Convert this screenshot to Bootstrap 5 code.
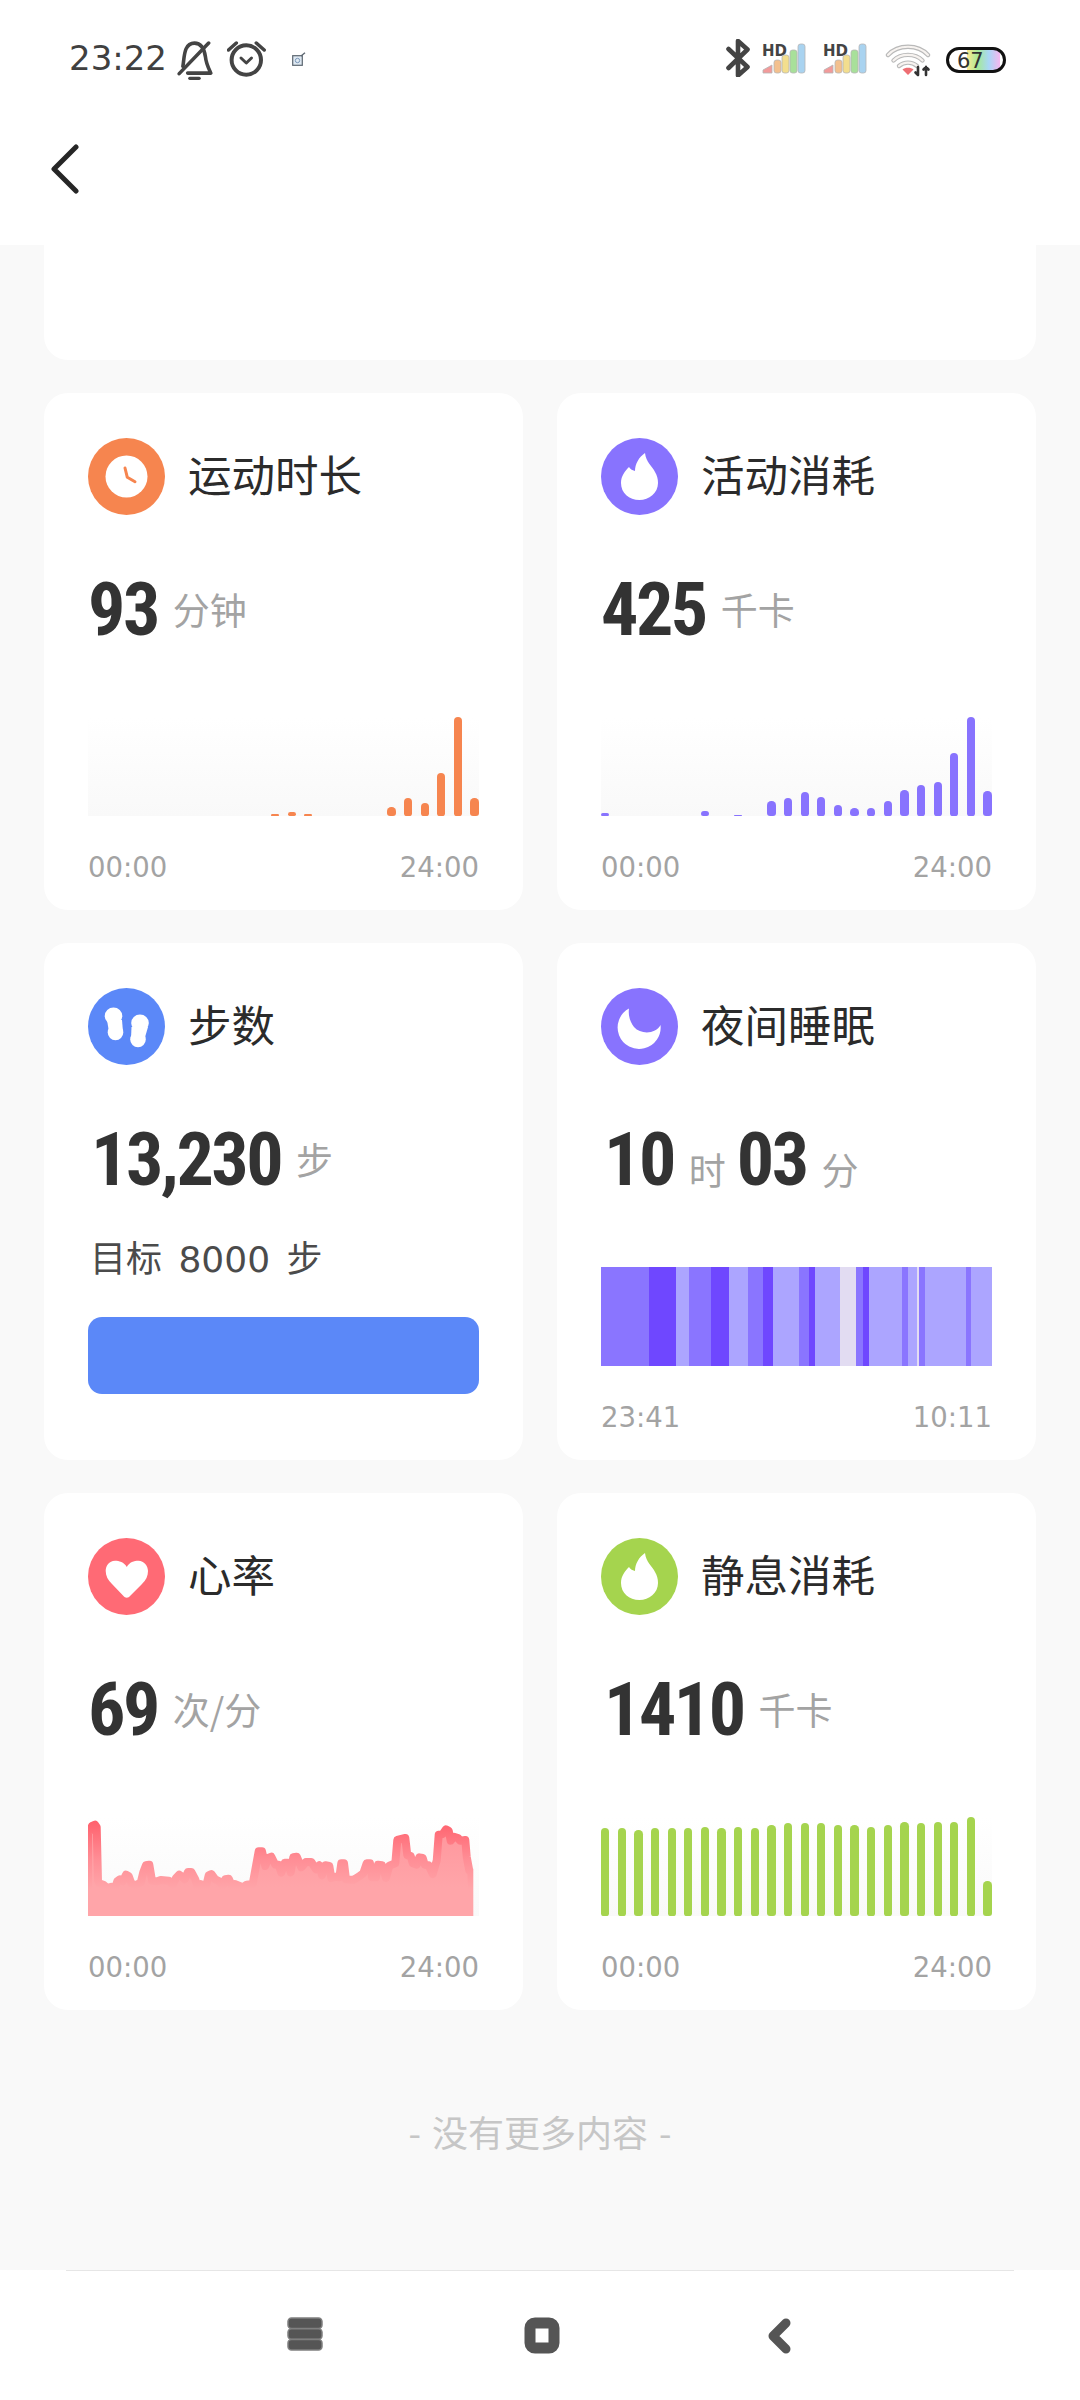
<!DOCTYPE html>
<html lang="zh-CN">
<head>
    <meta charset="UTF-8">
    <meta name="viewport" content="width=device-width, initial-scale=1.0">
    <title>Health</title>
    <link href="https://cdn.jsdelivr.net/npm/bootstrap@5.3.2/dist/css/bootstrap.min.css" rel="stylesheet">
    <style>
        body {
            width: 1080px;
            height: 2400px;
            overflow: hidden;
            background: #f9f9f9;
            font-family: "DejaVu Sans", "Noto Sans CJK SC", sans-serif;
        }
        .top-area { height: 245px; background: #fff; }
        .status-row { height: 116px; padding: 39px 74px 0 69px; }
        .clock-text { font-size: 34px; line-height: 38px; color: #404040; margin-right: 10px; }
        .icon-bell { margin-top: 2px; }
        .icon-alarm { margin: 2px 0 0 14px; }
        .icon-tiny { margin: 13px 0 0 26px; }
        .icon-hd { margin: 4px 0 0 12px; }
        .icon-hd + .icon-hd { margin-left: 17px; }
        .icon-wifi { margin: 4px 0 0 18px; }
        .icon-batt { margin: 8px 0 0 15px; }
        .back-btn { display: block; margin-left: 51px; margin-top: 28px; }

        .partial-card { height: 115px; margin: 0 44px 33px; background: #fff; border-radius: 0 0 24px 24px; }
        .grid-wrap { padding: 0 44px; }
        .grid-wrap .row { --bs-gutter-x: 34px; --bs-gutter-y: 33px; }
        .tile { height: 517px; border: 0; border-radius: 24px; padding: 45px 44px 0; }
        .tile-head { height: 77px; }
        .tile-head svg { flex: none; }
        .tile-title { margin-left: 23px; padding-bottom: 5px; font-family: "Noto Sans CJK SC", sans-serif; font-size: 43.5px; line-height: 72px; color: #2b2b2b; }
        .val-row { height: 73px; margin-top: 58px; }
        .val-row.nudge { padding-left: 3px; }
        .val-num {
            font-family: "Liberation Sans Narrow", "Roboto Condensed", "Liberation Sans", sans-serif;
            font-weight: 700;
            font-size: 74px;
            line-height: 73px;
            letter-spacing: -2.5px;
            color: #333;
        }
        .val-unit { margin-left: 15px; font-family: "Noto Sans CJK SC", sans-serif; font-size: 37px; line-height: 71px; color: #a3a3a3; }
        .val-unit + .val-num { margin-left: 11px; }
        .chart-box { height: 99px; margin-top: 71px; position: relative; background: linear-gradient(#fff, #f9f9f9); }
        .bar-item { width: 8.3px; border-radius: 4.2px 4.2px 3px 3px; }
        .sleep-box { height: 99px; margin-top: 71px; }
        .axis-row { margin-top: 33px; font-size: 27.5px; line-height: 36px; color: #a3a3a3; }
        .goal-text { margin: 41px 0 0 2px; font-size: 36px; line-height: 46px; color: #4b4b4b; word-spacing: 5px; }
        .goal-bar { height: 77px; margin-top: 34px; background: #5b88f8; border-radius: 14px; }
        .no-more { margin-top: 96px; text-align: center; font-family: "Noto Sans CJK SC", sans-serif; font-size: 36px; line-height: 50px; color: #c6c6c6; word-spacing: 3px; }
        .bottom-nav { position: fixed; left: 0; right: 0; bottom: 0; height: 130px; background: #fff; }
        .nav-line { height: 1px; margin: 0 66px; background: #e6e6e6; }
        .nav-icons { padding: 46px 0 0 186px; }
        .nav-cell { width: 237px; text-align: center; }
    </style>
</head>
<body>

    <!-- Status bar and back button -->
    <div class="top-area">
        <div class="status-row d-flex align-items-start">
            <span class="clock-text">23:22</span>
            <svg class="icon-bell" width="36" height="40" viewBox="0 0 34 38" fill="none" stroke="#444" stroke-width="3.4" stroke-linecap="round" stroke-linejoin="round">
                <path d="M5.5 24C7 16 6 2 16.5 2C23 2 26 8 27 15.5C27.5 21 30 26 32 30.5H10"/>
                <path d="M30 2L2 31"/>
                <path d="M12 35.5H21" stroke-width="3"/>
            </svg>
            <svg class="icon-alarm" width="39" height="37" viewBox="0 0 39 37" fill="none" stroke="#444" stroke-linecap="round" stroke-linejoin="round">
                <circle cx="19.3" cy="19" r="14.7" stroke-width="4"/>
                <path d="M14 17L19.3 22L24.5 17" stroke-width="3"/>
                <path d="M1.5 9L9.3 2M29.3 2L37.2 9" stroke-width="3.5"/>
            </svg>
            <svg class="icon-tiny" width="14" height="14" viewBox="0 0 14 14" fill="none">
                <rect x="0.7" y="3.7" width="9.6" height="9.6" fill="#dfe9f2" stroke="#5c6670" stroke-width="1.2"/>
                <circle cx="5.5" cy="8.5" r="2.2" stroke="#7a97b8"/>
                <path d="M9 4L13 0.8" stroke="#5c6670" stroke-width="1.4"/>
            </svg>

            <svg class="ms-auto" width="24" height="38" viewBox="0 0 24 38" fill="none" stroke="#444" stroke-width="4.6" stroke-linecap="round" stroke-linejoin="round">
                <path d="M2.5 10L21.5 28L12 36.5V2L21.5 10.5L2.5 29"/>
            </svg>
            <svg class="icon-hd" width="44" height="32" viewBox="0 0 44 32">
                <text x="0" y="13" font-family="DejaVu Sans" font-weight="700" font-size="15" fill="#444">HD</text>
                <g stroke="#b5b5b5" stroke-width="0.8">
                    <path d="M1 30L1 27L10 22V30Z" fill="#f29a9a"/>
                    <rect x="12" y="17" width="7" height="13" rx="2.5" fill="#f3c08e"/>
                    <rect x="20" y="12" width="7" height="18" rx="2.5" fill="#f3de8e"/>
                    <rect x="28" y="7" width="7" height="23" rx="2.5" fill="#a8e09a"/>
                    <rect x="36" y="1" width="7" height="29" rx="2.5" fill="#a9d3f0"/>
                </g>
            </svg>
            <svg class="icon-hd" width="44" height="32" viewBox="0 0 44 32">
                <text x="0" y="13" font-family="DejaVu Sans" font-weight="700" font-size="15" fill="#444">HD</text>
                <g stroke="#b5b5b5" stroke-width="0.8">
                    <path d="M1 30L1 27L10 22V30Z" fill="#f29a9a"/>
                    <rect x="12" y="17" width="7" height="13" rx="2.5" fill="#f3c08e"/>
                    <rect x="20" y="12" width="7" height="18" rx="2.5" fill="#f3de8e"/>
                    <rect x="28" y="7" width="7" height="23" rx="2.5" fill="#a8e09a"/>
                    <rect x="36" y="1" width="7" height="29" rx="2.5" fill="#a9d3f0"/>
                </g>
            </svg>
            <svg class="icon-wifi" width="46" height="34" viewBox="0 0 46 34" fill="none" stroke-linecap="round">
                <g stroke="#b9b9b9" stroke-width="4.4">
                    <path d="M3 12C13 1 33 1 43 12"/>
                    <path d="M8.5 17.5C16 10 30 10 37.5 17.5"/>
                    <path d="M14 23C19 18.5 27 18.5 32 23"/>
                </g>
                <g stroke="#f7f3f0" stroke-width="2.2">
                    <path d="M3 12C13 1 33 1 43 12"/>
                    <path d="M8.5 17.5C16 10 30 10 37.5 17.5"/>
                    <path d="M14 23C19 18.5 27 18.5 32 23"/>
                </g>
                <path d="M23 32L17.5 26.5C20 24 26 24 28.5 26.5Z" fill="#ee6e73"/>
                <path d="M33 24V32M30.5 29.5L33 32M41 32V24M38.5 26.5L41 24L43.5 26.5" stroke="#333" stroke-width="2.6"/>
            </svg>
            <svg class="icon-batt" width="60" height="26" viewBox="0 0 60 26">
                <defs>
                    <linearGradient id="batteryFill">
                        <stop offset="0" stop-color="#ffe98f"/><stop offset=".33" stop-color="#a5e99a"/>
                        <stop offset=".66" stop-color="#a9d7f6"/><stop offset="1" stop-color="#f5b7ef"/>
                    </linearGradient>
                </defs>
                <rect x="21" y="3" width="33" height="20" fill="url(#batteryFill)"/>
                <rect x="1.5" y="1.5" width="57" height="23" rx="11.5" fill="none" stroke="#111" stroke-width="3"/>
                <text x="11" y="21" font-family="DejaVu Sans" font-size="21" fill="#333">67</text>
            </svg>
        </div>
        <svg class="back-btn" width="28" height="50" viewBox="0 0 28 50" fill="none" stroke="#262626" stroke-width="5" stroke-linecap="round" stroke-linejoin="round">
            <path d="M25 3L3 25L25 47"/>
        </svg>
    </div>

    <div class="partial-card"></div>

    <div class="grid-wrap">
        <div class="row row-cols-2">

            <!-- Exercise time -->
            <div class="col">
                <div class="card tile">
                    <div class="tile-head d-flex align-items-center">
                        <svg width="77" height="77" viewBox="0 0 77 77">
                            <circle cx="38.5" cy="38.5" r="38.5" fill="#f6854f"/>
                            <circle cx="38.5" cy="38.5" r="21" fill="#fff"/>
                            <path d="M37 30L39.3 39.3L47 43.7" fill="none" stroke="#f6854f" stroke-width="3" stroke-linecap="round" stroke-linejoin="round"/>
                        </svg>
                        <span class="tile-title">运动时长</span>
                    </div>
                    <div class="val-row d-flex align-items-center">
                        <span class="val-num">93</span><span class="val-unit">分钟</span>
                    </div>
                    <div class="chart-box d-flex justify-content-between align-items-end" data-color="#f6854f" data-bars="0,0,0,0,0,0,0,0,0,0,0,2,4,2,0,0,0,0,9,18,13,43,99,18"></div>
                    <div class="axis-row d-flex justify-content-between"><span>00:00</span><span>24:00</span></div>
                </div>
            </div>

            <!-- Active calories -->
            <div class="col">
                <div class="card tile">
                    <div class="tile-head d-flex align-items-center">
                        <svg width="77" height="77" viewBox="0 0 77 77">
                            <circle cx="38.5" cy="38.5" r="38.5" fill="#8873fe"/>
                            <path fill="#fff" d="M44 15C45 24 51 28 54 34C56 37 57 41 57 45C57 55 48 62 38.5 62C28 62 20 55 20 45C20 38 24 33 28 29C29 31 31 32 34 33C34 26 38 19 44 15Z"/>
                        </svg>
                        <span class="tile-title">活动消耗</span>
                    </div>
                    <div class="val-row d-flex align-items-center">
                        <span class="val-num">425</span><span class="val-unit">千卡</span>
                    </div>
                    <div class="chart-box d-flex justify-content-between align-items-end" data-color="#8873fe" data-bars="3,0,0,0,0,0,5,0,1,0,15,18,24,19,11,8.5,8,15,26,31,34,63,99,25"></div>
                    <div class="axis-row d-flex justify-content-between"><span>00:00</span><span>24:00</span></div>
                </div>
            </div>

            <!-- Steps -->
            <div class="col">
                <div class="card tile">
                    <div class="tile-head d-flex align-items-center">
                        <svg width="77" height="77" viewBox="0 0 77 77">
                            <circle cx="38.5" cy="38.5" r="38.5" fill="#5b88f8"/>
                            <g fill="#fff">
                                <ellipse cx="25.5" cy="28" rx="8.8" ry="8.5"/>
                                <ellipse cx="27.5" cy="44.5" rx="7.8" ry="7.8"/>
                                <path d="M19 32H34L35 44H21Z"/>
                                <ellipse cx="52" cy="35" rx="8.8" ry="8.5"/>
                                <ellipse cx="50" cy="51.5" rx="7.8" ry="7.8"/>
                                <path d="M43.5 39H60L56.5 51H43Z"/>
                            </g>
                        </svg>
                        <span class="tile-title">步数</span>
                    </div>
                    <div class="val-row d-flex align-items-center nudge">
                        <span class="val-num">13,230</span><span class="val-unit">步</span>
                    </div>
                    <div class="goal-text">目标 8000 步</div>
                    <div class="goal-bar"></div>
                </div>
            </div>

            <!-- Night sleep -->
            <div class="col">
                <div class="card tile">
                    <div class="tile-head d-flex align-items-center">
                        <svg width="77" height="77" viewBox="0 0 77 77">
                            <circle cx="38.5" cy="38.5" r="38.5" fill="#8873fe"/>
                            <path fill="#fff" d="M28 20.5A21.5 21.5 0 1 0 59.5 37C55 46 40 47 33 39C29 34 27 27 28 20.5Z"/>
                        </svg>
                        <span class="tile-title">夜间睡眠</span>
                    </div>
                    <div class="val-row d-flex align-items-baseline nudge">
                        <span class="val-num">10</span><span class="val-unit">时</span><span class="val-num">03</span><span class="val-unit">分</span>
                    </div>
                    <div class="sleep-box d-flex" data-stages="144m,81d,39l,66m,53d,58l,45m,30d,78l,30m,19d,74l,48p,21m,18d,99l,18m,27l,6p,18m,123l,15m,63l"></div>
                    <div class="axis-row d-flex justify-content-between"><span>23:41</span><span>10:11</span></div>
                </div>
            </div>

            <!-- Heart rate -->
            <div class="col">
                <div class="card tile">
                    <div class="tile-head d-flex align-items-center">
                        <svg width="77" height="77" viewBox="0 0 77 77">
                            <circle cx="38.5" cy="38.5" r="38.5" fill="#ff6a75"/>
                            <path fill="#fff" d="M38.8 29C36 24 31 22.7 27 22.7C21 22.7 17.7 28 17.7 33C17.7 38 20 42 24 46L35 57.5C37.5 60.5 40 60.5 42.5 57.5L54 46C58 42 60 38 60 33C60 28 56 22.7 50.5 22.7C46 22.7 41.5 24 38.8 29Z"/>
                        </svg>
                        <span class="tile-title">心率</span>
                    </div>
                    <div class="val-row d-flex align-items-center">
                        <span class="val-num">69</span><span class="val-unit">次/分</span>
                    </div>
                    <div class="chart-box">
                        <svg id="heartChart" width="391" height="99" viewBox="0 0 391 99" class="d-block">
                            <defs>
                                <linearGradient id="heartFill" gradientUnits="userSpaceOnUse" x1="0" y1="0" x2="0" y2="70">
                                    <stop offset="0" stop-color="#ff939a"/><stop offset="1" stop-color="#ffa5a9"/>
                                </linearGradient>
                                <linearGradient id="heartLine" gradientUnits="userSpaceOnUse" x1="0" y1="5" x2="0" y2="72">
                                    <stop offset="0" stop-color="#ff626e"/><stop offset=".55" stop-color="#ff8d95"/><stop offset="1" stop-color="#ffa5a9"/>
                                </linearGradient>
                                <clipPath id="heartClip"><rect x="0" y="-4" width="385.3" height="103"/></clipPath>
                            </defs>
                        </svg>
                    </div>
                    <div class="axis-row d-flex justify-content-between"><span>00:00</span><span>24:00</span></div>
                </div>
            </div>

            <!-- Resting calories -->
            <div class="col">
                <div class="card tile">
                    <div class="tile-head d-flex align-items-center">
                        <svg width="77" height="77" viewBox="0 0 77 77">
                            <circle cx="38.5" cy="38.5" r="38.5" fill="#a5d44e"/>
                            <path fill="#fff" d="M44 15C45 24 51 28 54 34C56 37 57 41 57 45C57 55 48 62 38.5 62C28 62 20 55 20 45C20 38 24 33 28 29C29 31 31 32 34 33C34 26 38 19 44 15Z"/>
                        </svg>
                        <span class="tile-title">静息消耗</span>
                    </div>
                    <div class="val-row d-flex align-items-center nudge">
                        <span class="val-num">1410</span><span class="val-unit">千卡</span>
                    </div>
                    <div class="chart-box d-flex justify-content-between align-items-end" data-color="#a5d44e" data-bars="88,88,86,88,88,88,89,88,89,88,91,93,93,93,91,91,89,91,94,93,94,94,99,35"></div>
                    <div class="axis-row d-flex justify-content-between"><span>00:00</span><span>24:00</span></div>
                </div>
            </div>
        </div>
    </div>

    <div class="no-more">- 没有更多内容 -</div>

    <!-- Bottom navigation -->
    <div class="bottom-nav">
        <div class="nav-line"></div>
        <div class="nav-icons d-flex">
            <div class="nav-cell">
                <svg width="36" height="34" viewBox="0 0 36 34">
                    <g fill="#555" stroke="#808080" stroke-width="1.5">
                        <rect x="1" y="1" width="34" height="10.5" rx="3.5"/>
                        <rect x="1" y="11.7" width="34" height="10.5" rx="3.5"/>
                        <rect x="1" y="22.4" width="34" height="10.5" rx="3.5"/>
                    </g>
                </svg>
            </div>
            <div class="nav-cell">
                <svg width="36" height="37" viewBox="0 0 36 37">
                    <rect x="6" y="6" width="24" height="25" rx="5" fill="#fff" stroke="#555" stroke-width="11"/>
                </svg>
            </div>
            <div class="nav-cell">
                <svg width="26" height="38" viewBox="0 0 26 38" fill="none" stroke="#555" stroke-width="9" stroke-linecap="round" stroke-linejoin="round">
                    <path d="M20 6L7 19L20 32"/>
                </svg>
            </div>
        </div>
    </div>

    <script src="https://cdn.jsdelivr.net/npm/bootstrap@5.3.2/dist/js/bootstrap.bundle.min.js"></script>
    <script>
        // bar charts
        document.querySelectorAll("[data-bars]").forEach(function (box) {
            box.dataset.bars.split(",").forEach(function (h) {
                const bar = document.createElement("div");
                bar.className = "bar-item";
                bar.style.height = h + "px";
                if (h > 0) bar.style.background = box.dataset.color;
                box.appendChild(bar);
            });
        });

        // sleep stages, widths are 3x pixels
        const stageColors = { m: "#8a75ff", d: "#6f47ff", l: "#aca5ff", p: "#e2dcf2" };
        document.querySelectorAll("[data-stages]").forEach(function (box) {
            box.dataset.stages.split(",").forEach(function (s) {
                const part = document.createElement("div");
                part.style.width = (parseInt(s) / 3) + "px";
                part.style.background = stageColors[s.slice(-1)];
                box.appendChild(part);
            });
        });

        // heart rate outline, traced as x,y pairs in 3x pixels
        const heartPts = [0,270,8,270,12,282,21,286,26,278,30,118,34,110,46,106,58,96,70,100,81,96,88,116,96,122,104,116,114,136,122,132,130,110,142,104,158,112,166,143,174,164,184,166,192,118,208,116,218,120,242,118,254,106,264,126,274,136,282,130,290,122,300,144,310,144,322,122,328,102,338,108,354,100,362,134,370,138,382,122,394,116,404,102,412,122,422,124,432,102,440,108,464,98,476,106,494,108,504,162,512,206,522,206,532,162,540,186,550,190,562,166,572,166,580,142,590,172,600,172,608,143,616,188,626,190,640,158,654,174,670,174,684,152,694,164,702,134,712,164,724,162,730,126,744,130,754,128,760,170,768,170,774,122,796,120,812,130,826,140,836,170,846,170,852,128,864,128,870,166,882,164,894,126,904,163,922,170,928,240,952,246,958,194,968,192,974,170,986,166,994,188,1004,186,1010,166,1022,164,1034,138,1046,178,1052,256,1064,258,1074,272,1082,268,1088,238,1098,250,1110,246,1116,238,1132,240,1136,190,1144,148,1150,144,1156,0];
        let d = "M0 99";
        for (let i = 0; i < heartPts.length; i += 2) {
            d += "L" + (heartPts[i] / 3).toFixed(1) + " " + (99 - heartPts[i + 1] / 3 + 4).toFixed(1);
        }
        const svgNs = "http://www.w3.org/2000/svg";
        const heartChart = document.getElementById("heartChart");
        heartChart.style.overflow = "visible";
        const fillPath = document.createElementNS(svgNs, "path");
        fillPath.setAttribute("d", d + "Z");
        fillPath.setAttribute("fill", "url(#heartFill)");
        fillPath.setAttribute("clip-path", "url(#heartClip)");
        const linePath = document.createElementNS(svgNs, "path");
        linePath.setAttribute("d", d);
        linePath.setAttribute("fill", "none");
        linePath.setAttribute("stroke", "url(#heartLine)");
        linePath.setAttribute("stroke-width", "8");
        linePath.setAttribute("stroke-linejoin", "round");
        linePath.setAttribute("clip-path", "url(#heartClip)");
        heartChart.appendChild(fillPath);
        heartChart.appendChild(linePath);
    </script>
</body>
</html>
